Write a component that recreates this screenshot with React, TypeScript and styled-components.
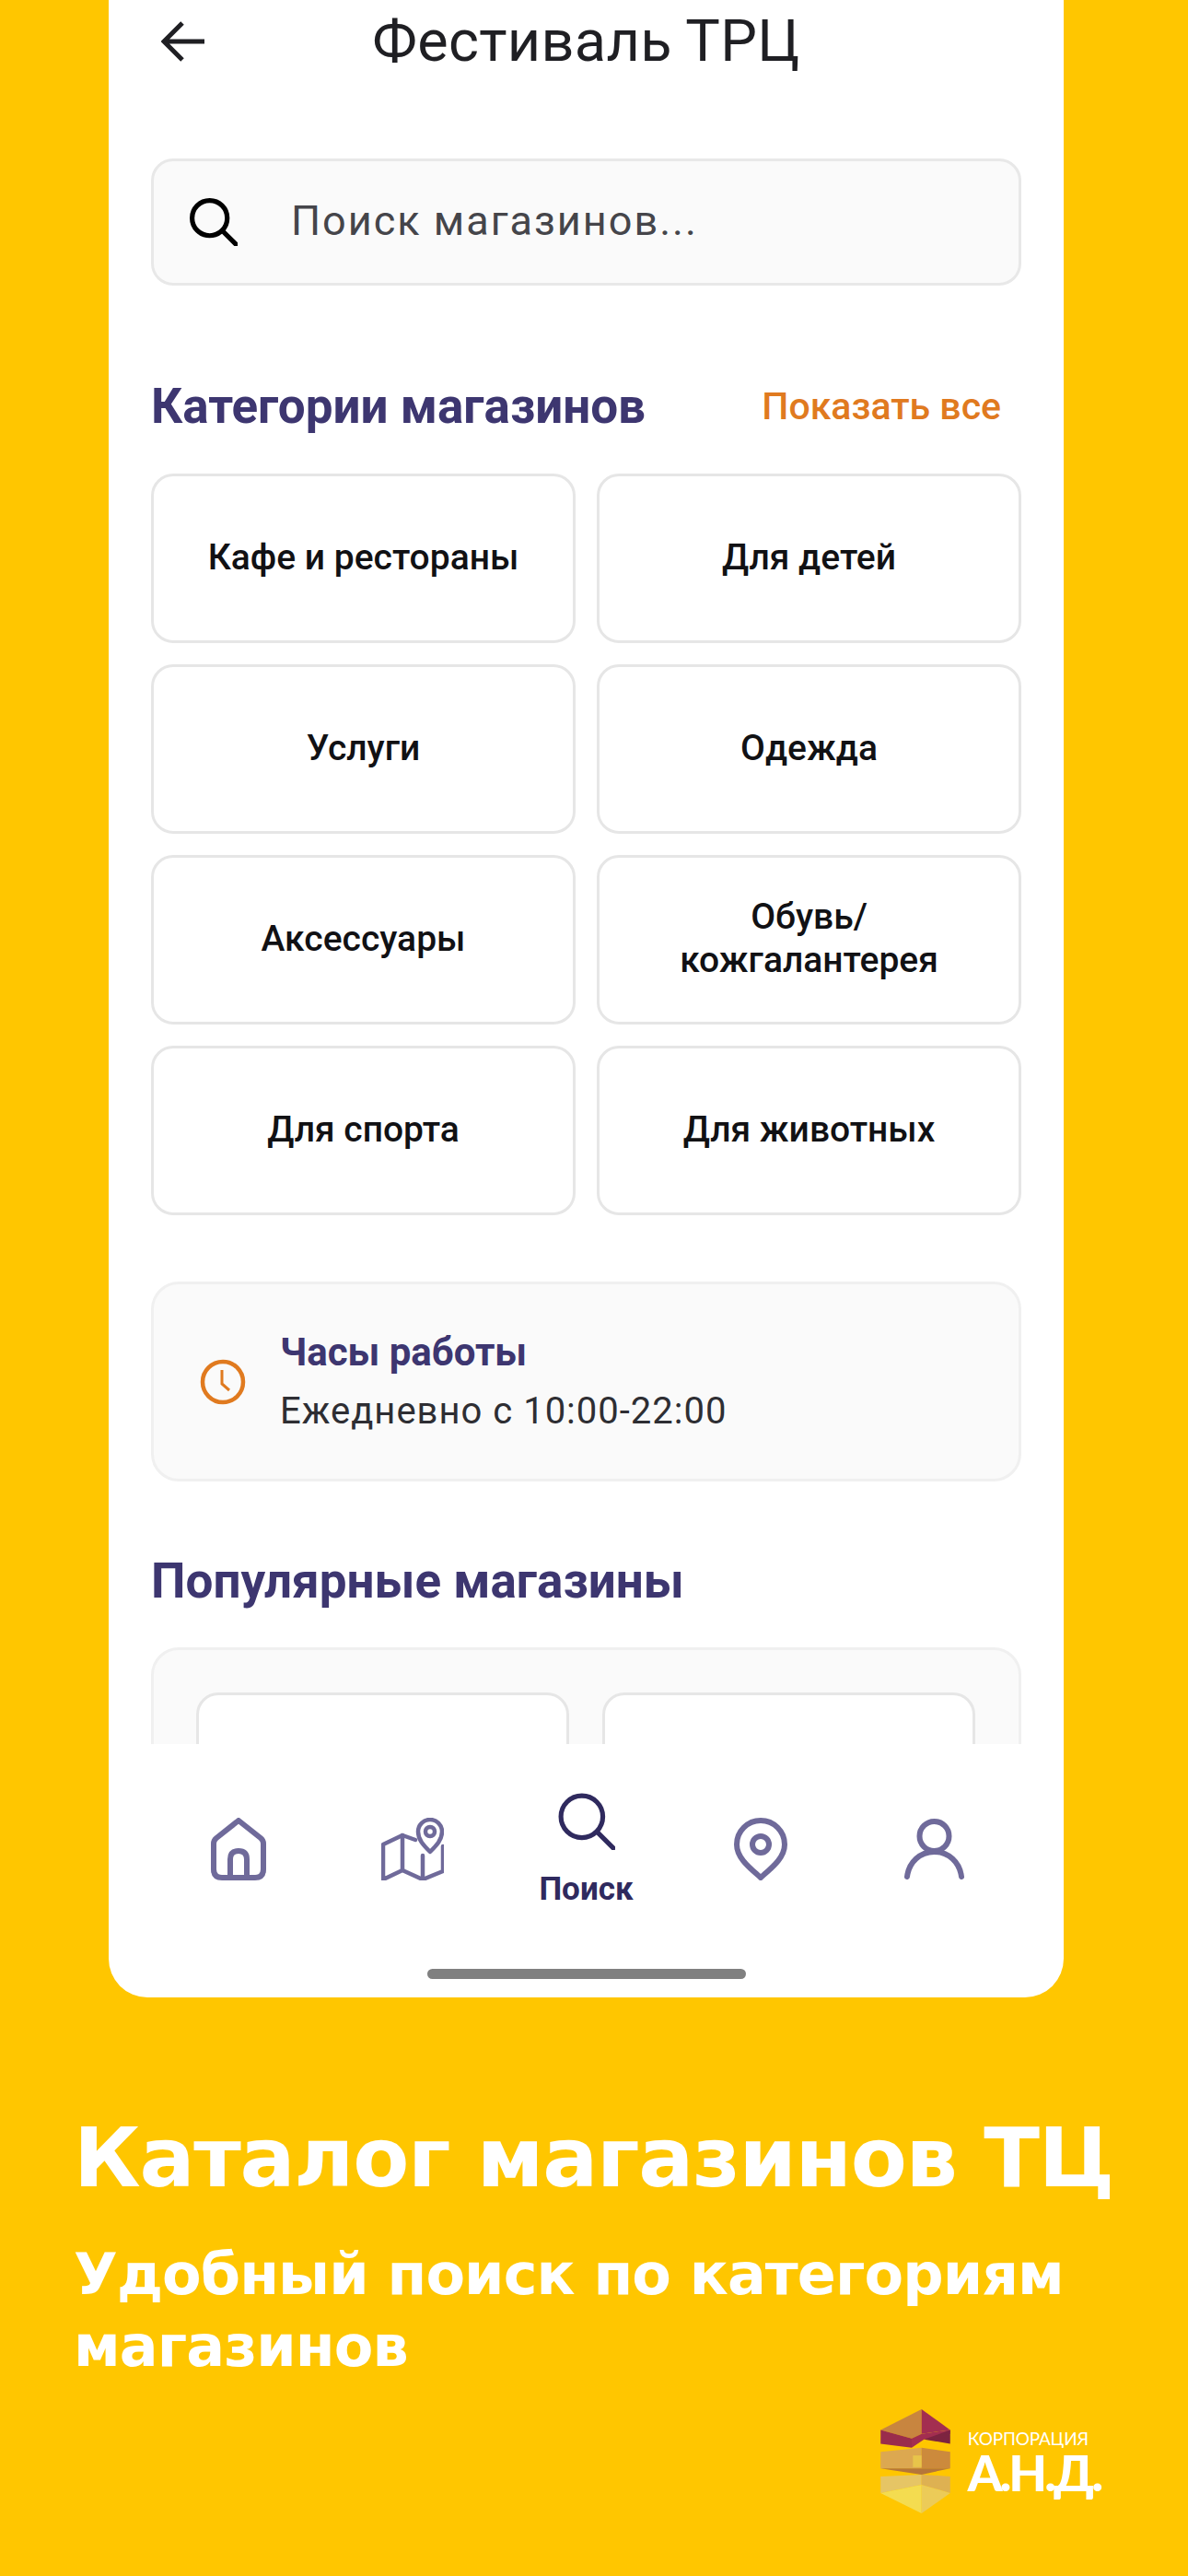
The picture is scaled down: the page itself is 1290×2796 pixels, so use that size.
import React, { FC } from "react";
import styled, { createGlobalStyle } from "styled-components";

const GlobalStyle = createGlobalStyle`
  html, body {
    margin: 0;
    padding: 0;
    background: #ffc600;
  }
  * {
    box-sizing: border-box;
  }
`;

const Page = styled.div`
  width: 1290px;
  height: 2796px;
  overflow: hidden;
  background: #ffc600;
  font-family: Roboto, "Noto Sans", sans-serif;
`;

const Phone = styled.div`
  width: 1037px;
  height: 2168px;
  margin-left: 118px;
  background: #fff;
  border-radius: 0 0 42px 42px;
  overflow: hidden;
`;

const Scroll = styled.div`
  height: 1893px;
  padding: 0 46px;
  overflow: hidden;
`;

const Header = styled.header`
  height: 90px;
  margin: 0 -46px;
  padding: 0 57px;
  display: grid;
  grid-template-columns: 1fr auto 1fr;
  align-items: center;
  color: #1f1f23;
`;

const Title = styled.h1`
  margin: 0;
  font-size: 63px;
  font-weight: 400;
  line-height: 86px;
  letter-spacing: 0.3px;
  color: #1f1f23;
`;

const SearchBox = styled.div`
  height: 138px;
  margin-top: 82px;
  padding-left: 39px;
  display: flex;
  align-items: center;
  gap: 58px;
  background: #fafafa;
  border: 3px solid #e8e8e8;
  border-radius: 24px;
`;

const SearchText = styled.span`
  font-size: 45px;
  line-height: 50px;
  padding-bottom: 3px;
  letter-spacing: 2px;
  color: #45454a;
`;

const SectionRow = styled.div`
  height: 60px;
  margin-top: 101px;
  padding-right: 22px;
  display: flex;
  align-items: center;
  justify-content: space-between;
`;

const SectionTitle = styled.h2`
  margin: 0;
  font-size: 53px;
  font-weight: 700;
  line-height: 60px;
  color: #3d3670;
`;

const ShowAll = styled.span`
  font-size: 41px;
  font-weight: 500;
  color: #e07a1f;
`;

const CategoryGrid = styled.div`
  margin-top: 43px;
  display: grid;
  grid-template-columns: 461px 461px;
  grid-auto-rows: 184px;
  gap: 23px;
`;

const CategoryCard = styled.div`
  padding: 0 30px 2px;
  display: flex;
  align-items: center;
  justify-content: center;
  text-align: center;
  font-size: 39px;
  font-weight: 500;
  line-height: 47px;
  color: #111114;
  background: #fff;
  border: 3px solid #e6e6e6;
  border-radius: 24px;
`;

const HoursCard = styled.div`
  height: 217px;
  margin-top: 72px;
  padding-left: 50px;
  display: flex;
  align-items: center;
  gap: 37px;
  background: #fafafa;
  border: 3px solid #f0f0f0;
  border-radius: 30px;
`;

const HoursText = styled.div`
  display: flex;
  flex-direction: column;
  gap: 14px;
`;

const HoursTitle = styled.div`
  font-size: 42px;
  font-weight: 700;
  line-height: 50px;
  color: #3d3670;
`;

const HoursValue = styled.div`
  font-size: 40px;
  line-height: 50px;
  letter-spacing: 1px;
  color: #2e2e33;
`;

const PopularTitle = styled(SectionTitle)`
  margin-top: 78px;
`;

const PopularCard = styled.div`
  height: 240px;
  margin-top: 42px;
  padding: 46px 46px 0;
  display: grid;
  grid-template-columns: 405px 405px;
  gap: 36px;
  background: #fafafa;
  border: 3px solid #f0f0f0;
  border-radius: 30px;
`;

const PopularItem = styled.div`
  height: 200px;
  background: #fff;
  border: 3px solid #e6e6e6;
  border-radius: 24px;
`;

const Nav = styled.nav`
  height: 228px;
  padding: 0 46px;
  display: grid;
  grid-template-columns: repeat(5, 189px);
  align-items: center;
  background: #fff;
`;

const NavItem = styled.div`
  display: flex;
  flex-direction: column;
  align-items: center;
  gap: 29px;
  color: #6f6a9a;
`;

const ActiveNavItem = styled(NavItem)`
  padding-bottom: 4px;
  color: #2f2a5e;
`;

const NavLabel = styled.span`
  font-size: 35px;
  font-weight: 700;
  line-height: 28px;
  color: #2f2a5e;
`;

const HomeBar = styled.div`
  width: 346px;
  height: 11px;
  margin: 16px auto 0;
  background: #808080;
  border-radius: 6px;
`;

const Promo = styled.section`
  padding: 119px 0 0 80px;
  color: #fff;
  font-family: "DejaVu Sans", Inter, sans-serif;
`;

const PromoTitle = styled.div`
  font-size: 89px;
  font-weight: 700;
  line-height: 110px;
  letter-spacing: -1.3px;
  white-space: nowrap;
`;

const PromoSubtitle = styled.div`
  margin-top: 33px;
  font-size: 62px;
  font-weight: 700;
  line-height: 78px;
  letter-spacing: -0.9px;
`;

const LogoRow = styled.div`
  margin-top: 29px;
  padding-right: 95px;
  display: flex;
  justify-content: flex-end;
  align-items: center;
  gap: 19px;
  color: #fff;
`;

const LogoText = styled.div`
  display: flex;
  flex-direction: column;
  font-family: Lato, "Open Sans", sans-serif;
`;

const LogoSmall = styled.span`
  font-size: 19px;
  font-weight: 400;
  line-height: 24px;
  letter-spacing: -0.2px;
`;

const LogoBig = styled.span`
  font-size: 54px;
  font-weight: 900;
  line-height: 50px;
  letter-spacing: -3px;
`;

const BackIcon: FC = () => (
  <svg width="47" height="44" viewBox="0 0 47 44" fill="none" stroke="currentColor" strokeWidth="5">
    <path d="M47 22H3M23 2 3 22l20 20" />
  </svg>
);

const SearchIcon: FC<{ size: number; stroke: number }> = ({ size, stroke }) => (
  <svg width={size} height={size} viewBox="0 0 60 60" fill="none" stroke="currentColor" strokeWidth={stroke} strokeLinecap="round">
    <circle cx="25" cy="25" r="22" />
    <path d="M41 41 58 58" />
  </svg>
);

const ClockIcon: FC = () => (
  <svg width="50" height="50" viewBox="0 0 50 50" fill="none" stroke="#e07a1f" strokeWidth="4.5">
    <circle cx="25" cy="25" r="22" />
    <path d="M24 12v15l8 7" strokeWidth="3" />
  </svg>
);

const HomeIcon: FC = () => (
  <svg width="60" height="68" viewBox="0 0 60 68" fill="none" stroke="currentColor" strokeWidth="6" strokeLinejoin="round">
    <path d="M30 3 6 22q-3 2.500-3 6v28q0 9 9 9h36q9 0 9-9V28q0-3.500-3-6Z" />
    <path d="M21 65V45q0-9 9-9t9 9v20" />
  </svg>
);

const MapIcon: FC = () => (
  <svg width="68" height="68" viewBox="0 0 68 68" fill="none" stroke="currentColor" strokeWidth="4.500" strokeLinejoin="round" strokeLinecap="round">
    <path d="M37 24 23 19 2 29v38l21-10 22 10 22-9V31" />
    <path d="M23 19v38M45 41v26" />
    <path d="M53 37C46 30 40 24 40 15a13 13 0 0 1 26 0c0 9-6 15-13 22Z" />
    <circle cx="53" cy="15" r="5" />
  </svg>
);

const PinIcon: FC = () => (
  <svg width="58" height="68" viewBox="0 0 58 68" fill="none" stroke="currentColor" strokeWidth="6" strokeLinejoin="round">
    <path d="M29 65C18 55 3 44 3 29a26 26 0 0 1 52 0c0 15-15 26-26 36Z" />
    <circle cx="29" cy="29" r="9" />
  </svg>
);

const UserIcon: FC = () => (
  <svg width="65" height="66" viewBox="0 0 65 66" fill="none" stroke="currentColor" strokeWidth="6" strokeLinecap="round">
    <circle cx="32.5" cy="19" r="16" />
    <path d="M3 63C5 47 17 36 32.500 36S60 47 62 63" />
  </svg>
);

const LogoMark: FC = () => (
  <svg width="76" height="113" viewBox="104 80 226 338">
    <polygon points="237,80 104,147 205,175 237,160" fill="#c8853f" />
    <polygon points="237,80 330,147 237,160" fill="#a32e50" />
    <polygon points="104,147 205,175 205,205 104,192" fill="#9a2c4c" />
    <polygon points="205,175 237,160 330,147 330,160 245,178 205,205" fill="#a32e50" />
    <polygon points="330,147 330,192 245,178" fill="#7d2440" />
    <polygon points="104,218 237,205 237,272 104,272" fill="#dca850" />
    <polygon points="237,205 330,218 330,272 237,272" fill="#cc8a3c" />
    <polygon points="209,230 237,230 237,268 209,268" fill="#e8c44a" />
    <polygon points="104,272 237,292 330,272 237,272" fill="#b5763a" />
    <polygon points="104,298 237,292 237,325 104,352" fill="#e6c565" />
    <polygon points="237,292 330,298 330,352 237,325" fill="#deb152" />
    <polygon points="104,352 237,325 237,418" fill="#f4dc50" />
    <polygon points="237,325 330,352 237,418" fill="#eccb58" />
  </svg>
);

const categories = [
  "Кафе и рестораны",
  "Для детей",
  "Услуги",
  "Одежда",
  "Аксессуары",
  "Обувь/ кожгалантерея",
  "Для спорта",
  "Для животных",
];

const App: FC = () => {
  return (
    <Page>
      <GlobalStyle />
      <Phone>
        <Scroll>
          <Header>
            <BackIcon />
            <Title>Фестиваль ТРЦ</Title>
          </Header>
          <SearchBox>
            <SearchIcon size={52} stroke={6} />
            <SearchText>Поиск магазинов...</SearchText>
          </SearchBox>
          <SectionRow>
            <SectionTitle>Категории магазинов</SectionTitle>
            <ShowAll>Показать все</ShowAll>
          </SectionRow>
          <CategoryGrid>
            {categories.map((name) => (
              <CategoryCard key={name}>{name}</CategoryCard>
            ))}
          </CategoryGrid>
          <HoursCard>
            <ClockIcon />
            <HoursText>
              <HoursTitle>Часы работы</HoursTitle>
              <HoursValue>Ежедневно с 10:00-22:00</HoursValue>
            </HoursText>
          </HoursCard>
          <PopularTitle>Популярные магазины</PopularTitle>
          <PopularCard>
            <PopularItem />
            <PopularItem />
          </PopularCard>
        </Scroll>
        <Nav>
          <NavItem>
            <HomeIcon />
          </NavItem>
          <NavItem>
            <MapIcon />
          </NavItem>
          <ActiveNavItem>
            <SearchIcon size={62} stroke={5} />
            <NavLabel>Поиск</NavLabel>
          </ActiveNavItem>
          <NavItem>
            <PinIcon />
          </NavItem>
          <NavItem>
            <UserIcon />
          </NavItem>
        </Nav>
        <HomeBar />
      </Phone>
      <Promo>
        <PromoTitle>Каталог магазинов ТЦ</PromoTitle>
        <PromoSubtitle>
          Удобный поиск по категориям
          <br />
          магазинов
        </PromoSubtitle>
        <LogoRow>
          <LogoMark />
          <LogoText>
            <LogoSmall>КОРПОРАЦИЯ</LogoSmall>
            <LogoBig>А.Н.Д.</LogoBig>
          </LogoText>
        </LogoRow>
      </Promo>
    </Page>
  );
};

export default App;
